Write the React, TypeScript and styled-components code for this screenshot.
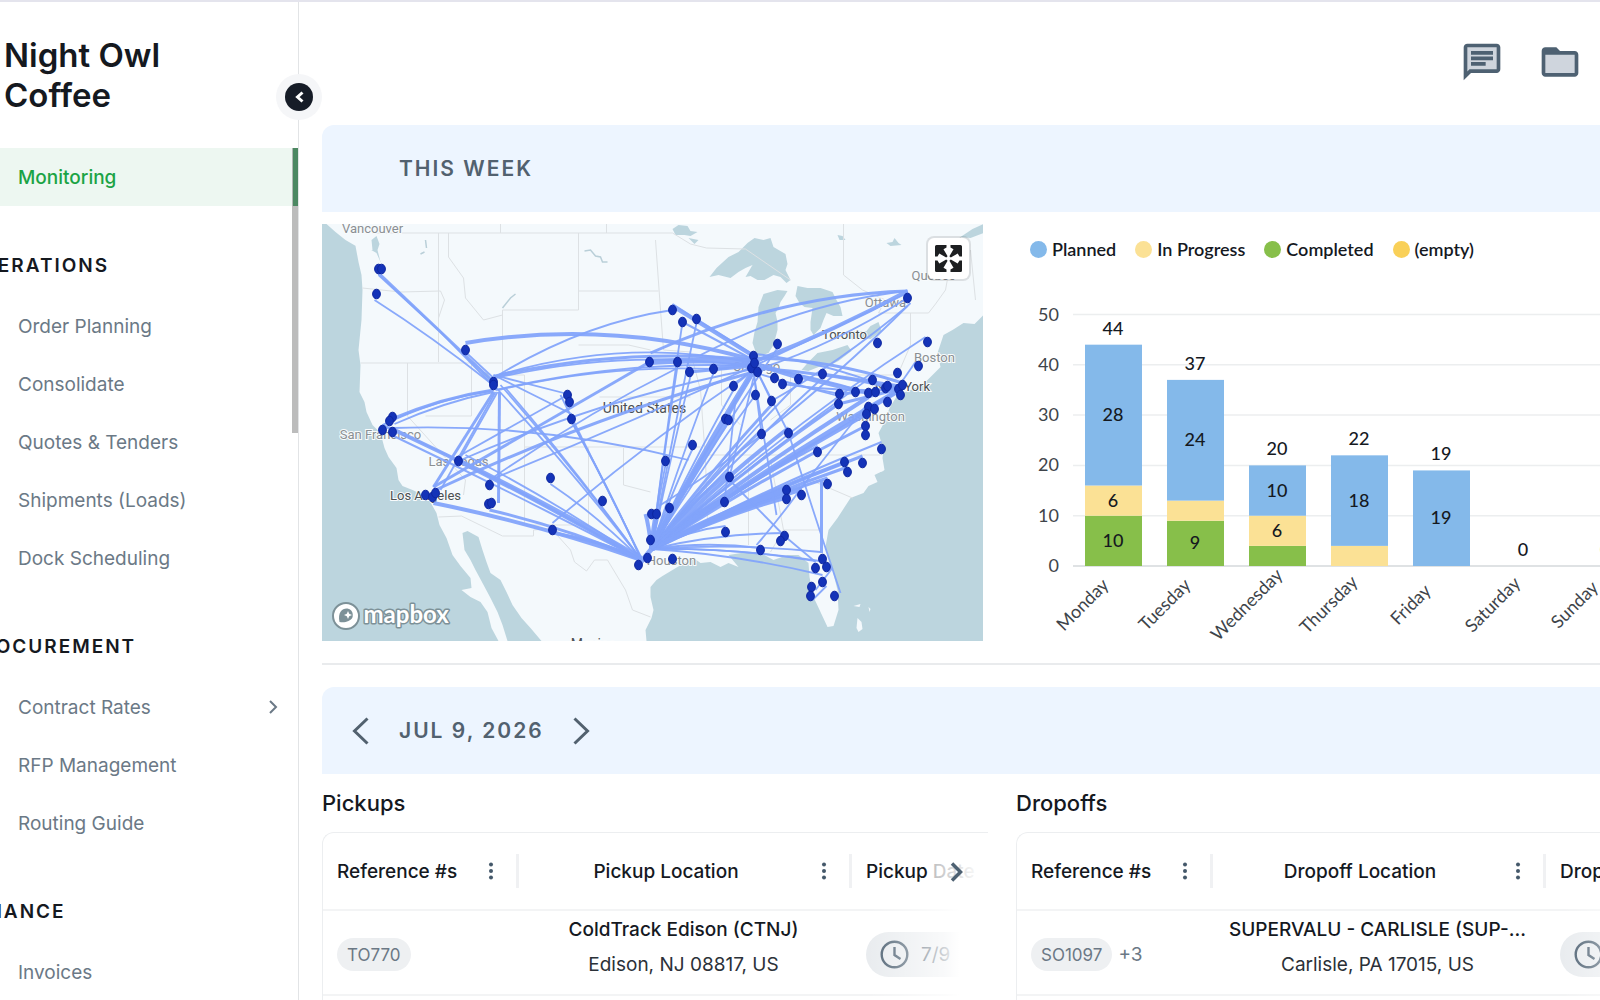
import React from "react";
import styled, { createGlobalStyle } from "styled-components";

const GlobalStyle = createGlobalStyle`
  *, *::before, *::after { box-sizing: border-box; }
  body {
    margin: 0;
    background: #fff;
    color: #15191f;
    font-family: Inter, "Liberation Sans", sans-serif;
    overflow: hidden;
  }
  button { font: inherit; color: inherit; background: none; border: 0; padding: 0; cursor: pointer; }
  h1, h2, h3, ul, p { margin: 0; padding: 0; font-weight: inherit; }
  ul { list-style: none; }
`;

/* ---------- shell ---------- */

const Shell = styled.div`
  display: flex;
  height: 100vh;
  overflow: hidden;
  border-top: 2px solid #e4e4ed;
`;

const Sidebar = styled.aside`
  position: relative;
  flex: 0 0 299px;
  border-right: 1px solid #e2e4e6;
`;

const Brand = styled.h1`
  height: 146px;
  padding: 33px 100px 0 4px;
  font-size: 33px;
  line-height: 40px;
  font-weight: 600;
`;

const CollapseButton = styled.button`
  position: absolute;
  top: 72px;
  right: -24px;
  z-index: 2;
  display: grid;
  place-items: center;
  width: 46px;
  height: 46px;
  border-radius: 50%;
  background: #f5f6f8;
`;

const CollapseDisc = styled.span`
  display: grid;
  place-items: center;
  width: 28px;
  height: 28px;
  border-radius: 50%;
  background: #161c27;
  color: #fff;
`;

const ScrollThumb = styled.div`
  position: absolute;
  top: 146px;
  right: 0;
  width: 6px;
  height: 285px;
  background: rgba(96, 96, 96, 0.42);
`;

const NavHeading = styled.h2`
  height: 60px;
  margin-left: -33px;
  font-size: 19px;
  line-height: 58px;
  font-weight: 600;
  letter-spacing: 2px;
`;

const NavSection = styled.section`
  padding-top: 31px;
`;

const NavLink = styled.a<{ $active?: boolean }>`
  display: flex;
  align-items: center;
  justify-content: space-between;
  height: 58px;
  padding: 0 20px 0 18px;
  font-size: 19px;
  text-decoration: none;
  font-weight: ${(p) => (p.$active ? 500 : 400)};
  color: ${(p) => (p.$active ? "#1ba345" : "#6b7986")};
  background: ${(p) => (p.$active ? "#edf7f1" : "transparent")};
  border-right: ${(p) => (p.$active ? "5px solid #3fa565" : "0")};
`;

const Main = styled.main`
  flex: 1;
  min-width: 0;
  padding-left: 23px;
  overflow: hidden;
`;

const TopBar = styled.header`
  display: flex;
  align-items: flex-start;
  justify-content: flex-end;
  gap: 34px;
  height: 123px;
  padding: 38px 18px 0 0;
`;

const Content = styled.div`
  width: calc(100% + 82px);
`;

const Banner = styled.div`
  display: flex;
  align-items: center;
  height: 87px;
  padding-left: 30px;
  border-radius: 12px 12px 0 0;
  background: #edf5ff;
  color: #52616f;
`;

const BannerSlot = styled.div`
  width: 47px;
  display: flex;
`;

const BannerTitle = styled.h2`
  padding-right: 29px;
  font-size: 21px;
  font-weight: 600;
  letter-spacing: 2px;
`;

const IconButton = styled.button`
  display: grid;
  place-items: center;
`;

const Columns = styled.div`
  display: grid;
  grid-template-columns: repeat(2, minmax(0, 1fr));
  gap: 28px;
`;

const Overview = styled(Columns)`
  padding: 12px 0 22px;
  margin-bottom: 22px;
  border-bottom: 2px solid #e9ebed;
`;

const MapFrame = styled.div`
  position: relative;
  height: 417px;
  margin-right: 5px;
  overflow: hidden;
`;

const ExpandButton = styled.button`
  position: absolute;
  top: 14px;
  right: 14px;
  display: grid;
  place-items: center;
  width: 41px;
  height: 41px;
  border-radius: 6px;
  background: #fff;
  box-shadow: 0 0 0 2px rgba(0, 0, 0, 0.1);
`;

const Drawing = styled.svg`
  display: block;
  overflow: hidden;
`;

const ChartBox = styled.div`
  font-family: Lato, "Liberation Sans", sans-serif;
  padding-top: 13px;
  height: 417px;
  overflow: hidden;
`;

const Legend = styled.ul`
  display: flex;
  gap: 19px;
  height: 24px;
  padding-left: 14px;
  font-size: 18px;
  line-height: 24px;
  font-weight: 600;
`;

const LegendItem = styled.li`
  display: flex;
  align-items: center;
  gap: 5px;
`;

const LegendDot = styled.span<{ $color: string }>`
  width: 17px;
  height: 17px;
  border-radius: 50%;
  background: ${(p) => p.$color};
`;

/* ---------- tables ---------- */

const TableTitle = styled.h3`
  height: 58px;
  font-size: 22px;
  line-height: 58px;
  font-weight: 500;
`;

const TableCard = styled.div`
  position: relative;
  overflow: hidden;
  border: 1px solid #eceef0;
  border-right: 0;
  border-radius: 12px 0 0 0;
`;

const Table = styled.table`
  width: 760px;
  border-collapse: collapse;
  table-layout: fixed;
`;

const Th = styled.th`
  height: 77px;
  padding: 0;
  border-bottom: 2px solid #f3f4f5;
  font-size: 19px;
  font-weight: 500;
`;

const HeadCell = styled.div<{ $center?: boolean }>`
  display: flex;
  align-items: center;
  height: 34px;
  padding: 0 0 0 14px;
  border-right: 3px solid #f0f1f3;
  text-align: ${(p) => (p.$center ? "center" : "left")};
`;

const HeadLabel = styled.span`
  flex: 1;
  white-space: nowrap;
`;

const MenuButton = styled.button`
  display: grid;
  place-items: center;
  width: 50px;
  height: 34px;
`;

const Td = styled.td<{ $center?: boolean }>`
  height: 85px;
  padding: ${(p) => (p.$center ? "0 4px 12px 0" : "0 0 0 14px")};
  border-bottom: 2px solid #f3f4f5;
  text-align: ${(p) => (p.$center ? "center" : "left")};
  font-size: 19px;
  line-height: 35px;
  color: #2b3138;
  white-space: nowrap;
`;

const Place = styled.strong`
  display: block;
  font-weight: 500;
  color: #15191f;
`;

const RefCell = styled.div`
  display: flex;
  align-items: center;
  gap: 6px;
  padding-top: 4px;
  color: #6b7885;
`;

const Chip = styled.span`
  height: 33px;
  padding: 0 10px;
  border-radius: 17px;
  background: #eef0f2;
  font-size: 17px;
  line-height: 35px;
`;

const DateChip = styled.div`
  display: flex;
  align-items: center;
  gap: 12px;
  width: 190px;
  height: 45px;
  margin-top: 4px;
  padding-left: 14px;
  border-radius: 23px;
  background: #e9ecef;
  color: #52616f;
`;

const BodyFade = styled.div`
  position: absolute;
  top: 76px;
  right: 0;
  bottom: 0;
  width: 120px;
  background: linear-gradient(to right, rgba(255, 255, 255, 0), rgba(255, 255, 255, 0.72) 64%, #fff 76%);
`;

const ScrollRight = styled.button`
  position: absolute;
  top: 4px;
  right: 0;
  display: flex;
  align-items: center;
  width: 60px;
  height: 70px;
  padding-left: 20px;
  background: linear-gradient(to right, rgba(255, 255, 255, 0.7), #fff 90%);
`;

/* ---------- icons ---------- */

function Chevron({ dir, w, h, stroke }: { dir: "left" | "right"; w: number; h: number; stroke: number }) {
  const p = stroke / 2;
  const d =
    dir === "left"
      ? `M${w - p} ${p} L${p + 1} ${h / 2} L${w - p} ${h - p}`
      : `M${p} ${p} L${w - p - 1} ${h / 2} L${p} ${h - p}`;
  return (
    <svg width={w} height={h} viewBox={`0 0 ${w} ${h}`} fill="none" stroke="currentColor" strokeWidth={stroke} aria-hidden>
      <path d={d} />
    </svg>
  );
}

const ChatIcon = () => (
  <svg width="44" height="44" viewBox="0 0 24 24" aria-hidden>
    <path d="M3 3h18v14H5l-2 2z" fill="#cfd5dd" />
    <path
      fill="#4e6172"
      d="M4 4h16v12H5.170L4 17.170V4m0-2c-1.100 0-1.990.9-1.990 2L2 22l4-4h14c1.100 0 2-.9 2-2V4c0-1.100-.9-2-2-2H4zm2 10h8v2H6v-2zm0-3h12v2H6V9zm0-3h12v2H6V6z"
    />
  </svg>
);

const FolderIcon = () => (
  <svg width="44" height="44" viewBox="0 0 24 24" aria-hidden>
    <path d="M3 7h18v12H3z" fill="#cfd5dd" />
    <path
      fill="#4e6172"
      d="M20 6h-8l-2-2H4c-1.100 0-1.990.9-1.990 2L2 18c0 1.100.9 2 2 2h16c1.100 0 2-.9 2-2V8c0-1.100-.9-2-2-2zm0 12H4V8h16v10z"
    />
  </svg>
);

const DotsIcon = () => (
  <svg width="6" height="18" viewBox="0 0 6 18" fill="#44586a" aria-hidden>
    <circle cx="3" cy="2.500" r="2" />
    <circle cx="3" cy="9" r="2" />
    <circle cx="3" cy="15.500" r="2" />
  </svg>
);

const ClockIcon = () => (
  <svg width="29" height="29" viewBox="0 0 29 29" fill="none" stroke="#4e6172" strokeWidth="2.400" aria-hidden>
    <circle cx="14.500" cy="14.500" r="12.800" />
    <path d="M14.500 7v8l6 4" />
  </svg>
);

const ExpandIcon = () => (
  <svg width="27" height="27" viewBox="0 0 27 27" fill="#1d1f21" aria-hidden>
    {[0, 90, 180, 270].map((a) => (
      <path
        key={a}
        transform={`rotate(${a} 13.500 13.500)`}
        d="M0 1.500Q0 0 1.500 0H11.500V2.500L8.500 4.300 12.600 11.200 11.200 12.600 4.300 8.500 2.500 11.500H0z"
      />
    ))}
  </svg>
);

/* ---------- map ---------- */

const LAND =
  "M326 224L335 232 345 240 357 247 372 250 371 240 376 236 379 244 377 250 380 262 376 253 369 249 355 246 358 262 361 275 362 290 361 320 358 350 360 365 359 392 364 402 366 412 372 425 380 433 384 448 388 457 396 468 398 480 402 486 412 490 427 497 436 513 439 525 446 538 452 555 460 566 470 578 471 588 461 590 470 597 480 602 487 612 491 628 498 641H507L502 625 497 612 490 598 482 583 475 570 470 560 464 550 462 533 467 531 478 537 482 550 486 562 490 573 500 580 506 592 512 605 521 618 530 628 541 641H646L645 630 651 618 653 610 650 597 650 587 656 580 662 576 677 567 693 558 700 563 710 562 720 567 728 563 738 567 733 561 728 555 747 552 760 553 773 560 787 555 798 555 808 563 809 577 813 597 820 612 827 627 833 626 838 610 837 590 832 570 825 547 828 530 837 518 850 498 863 493 868 486 877 482 874 475 884 470 882 458 883 450 878 433 884 422 889 408 897 395 915 388 927 380 940 367 937 353 943 335 952 330 963 323 974 324 983 315V224z";

const WATERS = [
  "M709 277L716 268 728 257 738 252 747 243 754 238 763 240 770 238 773 247 785 254 787 264 785 270 790 280 786 283 780 277 773 275 764 280 757 280 750 276 745 277 752 265 745 268 738 272 730 278 718 275z",
  "M763 294L770 292 777 290 787 291 784 296 780 302 778 308 775 313 777 322 777 330 773 345 768 353 757 357 752 343 754 332 757 322 758 307z",
  "M797 286L807 288 820 288 832 292 836 300 840 307 842 316 833 316 826 313 823 320 820 328 813 335 810 330 810 322 812 308 804 307 799 303 795 296z",
  "M801 370L808 362 817 353 832 350 847 345 851 351 838 361 828 366 818 367 808 371z",
  "M846 333L854 331 866 331 870 326 878 322 881 331 870 339 861 338 852 340z",
  "M960 237L972 229 983 224V233L970 238z",
  "M672 229L678 225 687 226 690 231 697 232 690 236 684 235 675 235z M688 238L698 240 694 244z",
  "M837 235L842 236 845 240 839 240z M886 243L892 242 894 238 898 243 901 245 890 246z",
  "M480 371L487 373 492 380 486 380z",
];

const BORDERS =
  "M372 233H672L690 244 706 248 745 249 790 280M843 224V275L862 290 885 300 878 313H928L935 304 945 290 950 262 960 237M448 233V257L463 278 465 298 483 320 502 315 502 310M438 233V362M362 288L400 292 440 291 444 300 438 318V362M360 363H502V310H578V233M502 352V375H524V447M578 291H658M578 345H628L650 350M471 363V416L425 416M407 363V416L465 480 463 495M438 517L461 516 502 536H533V530L556 528M599 397H690M524 447V525H588V447M524 447H700M623 448V485L650 492M552 530L570 550 574 562 586 571 594 560H607L625 590 632 610 650 617M655 240L660 310 663 350 690 352 700 390 705 460 707 520M721 370V405L740 425M748 460V545M770 460L783 530 770 552M783 530H820M700 455H880M810 480L852 498M790 370V405L770 420M845 375H893M910 313V345L895 380M970 250L975 300M500 224V233M606 224V233";

type Link = [number, number, number, number, number, number?];

const DALLAS = [651, 549];
const HOUSTON = [641, 560];
const SPOKES: [number, number, number?][] = [
  [493, 385], [500, 385], [505, 388], [465, 455], [382, 425, 3], [392, 428, 2], [433, 503, 4], [489, 510, 3], [552, 533, 3], [550, 484],
  [569, 418], [573, 425], [677, 366], [691, 372], [713, 373], [733, 390], [753, 370, 5], [755, 395], [725, 424, 6], [696, 323],
  [682, 322], [665, 465], [692, 449], [729, 472, 4], [724, 498, 3], [761, 430, 3], [771, 405, 3], [788, 428, 4], [798, 383],
  [822, 378, 2], [838, 404, 3], [868, 397, 4], [866, 414, 4], [899, 390, 5], [865, 426, 3], [881, 442, 2], [862, 456, 3],
  [844, 462, 3], [847, 467, 3], [827, 478, 3], [817, 446, 2], [801, 489, 5], [786, 490, 5], [786, 497, 5], [725, 526],
  [784, 533], [760, 548], [820, 552], [826, 562], [815, 561], [822, 575], [669, 512, 5], [777, 348], [872, 376], [656, 514, 8], [645, 514, 4],
];

const LINKS: Link[] = [
  [378, 273, 493, 382, 0, 3], [378, 275, 440, 332, 0], [374, 300, 490, 383, -3], [440, 332, 495, 388, 0],
  [465, 352, 493, 378, 0], [465, 343, 753, 360, -22, 4], [495, 376, 753, 360, -14, 3], [495, 376, 753, 363, -22],
  [495, 378, 868, 393, -34, 2], [495, 390, 753, 366, -12, 2], [498, 390, 713, 369, -10], [493, 378, 672, 310, -14],
  [389, 420, 493, 390, -5, 3], [394, 424, 493, 392, -4], [382, 425, 490, 391, -6], [392, 428, 688, 460, -14],
  [433, 487, 493, 392, 0, 3], [440, 490, 495, 392, 0], [458, 461, 497, 392, 0], [499, 392, 498, 503, 0, 3],
  [433, 487, 649, 362, 0, 3], [435, 490, 753, 372, -10, 3], [458, 461, 753, 369, -12], [489, 480, 677, 368, -6],
  [460, 461, 641, 558, -3, 4], [389, 434, 641, 560, -2, 2], [560, 395, 641, 558, 0],
  [552, 523, 753, 370, -6], [455, 458, 567, 395, 0], [493, 375, 571, 395, 0], [493, 375, 571, 414, 0],
  [672, 306, 753, 356, 0, 4], [682, 322, 753, 360, 0, 2], [696, 319, 755, 356, 0], [672, 304, 697, 320, 0],
  [907, 291, 753, 362, 4, 4], [907, 291, 650, 353, -18, 3], [907, 291, 700, 355, -14], [907, 298, 755, 370, 8, 2],
  [907, 306, 771, 401, 6], [910, 303, 660, 505, 16], [925, 337, 651, 549, -12], [915, 362, 899, 385, 0], [907, 293, 489, 480, 6],
  [753, 363, 868, 393, 2, 4], [753, 358, 902, 383, -8, 3], [753, 368, 899, 389, -4, 3], [755, 354, 886, 387, -6, 2],
  [777, 380, 838, 396, 0], [753, 372, 839, 394, 2], [782, 384, 899, 389, 4], [753, 365, 798, 379, 0], [757, 372, 771, 401, 0],
  [753, 372, 761, 434, 0], [757, 372, 788, 433, 0], [733, 386, 753, 370, 0], [725, 419, 753, 372, 0, 4],
  [649, 362, 753, 362, -2, 6], [689, 372, 753, 366, 0, 3], [713, 369, 753, 363, 0, 4],
  [839, 394, 899, 388, 0, 3], [838, 404, 899, 389, 0, 3], [865, 410, 900, 390, 0, 3], [822, 374, 899, 386, 0, 3],
  [753, 372, 776, 515, 0], [788, 433, 840, 593, 2], [821, 480, 821, 553, 0, 3],
  [729, 480, 784, 536, 0], [784, 536, 815, 562, 0], [756, 545, 803, 485, 2], [803, 485, 866, 405, 0], [735, 400, 724, 502, 0],
  [832, 568, 815, 590, 0], [826, 586, 812, 600, 0], [638, 565, 651, 549, 0, 5], [753, 378, 729, 477, 0],
];

const DOTS: [number, number][] = [
  [378, 269], [381, 269], [376, 294], [465, 350], [493, 382], [493, 385], [567, 395], [569, 402], [571, 419], [649, 362],
  [392, 417], [389, 421], [382, 430], [392, 432], [458, 461], [489, 485], [488, 504], [491, 503], [550, 478], [602, 501],
  [552, 530], [425, 495], [432, 497], [435, 493], [638, 565], [647, 558], [650, 540], [651, 514], [656, 514], [672, 310],
  [682, 322], [696, 319], [777, 344], [907, 298], [877, 343], [927, 342], [918, 366], [677, 362], [689, 372], [713, 369],
  [733, 386], [753, 356], [751, 368], [754, 363], [757, 372], [774, 378], [782, 384], [798, 379], [822, 374], [755, 395],
  [771, 401], [725, 419], [728, 420], [761, 434], [788, 433], [839, 394], [838, 404], [855, 392], [868, 393], [875, 392],
  [872, 380], [897, 373], [885, 388], [887, 386], [898, 389], [902, 385], [900, 395], [887, 402], [868, 407], [874, 409],
  [866, 414], [865, 426], [865, 435], [692, 445], [665, 461], [729, 477], [724, 502], [669, 508], [725, 532], [672, 559],
  [760, 550], [784, 536], [780, 541], [786, 490], [786, 499], [801, 495], [817, 452], [844, 462], [847, 472], [862, 463],
  [881, 449], [827, 484], [822, 559], [815, 568], [826, 567], [822, 582], [811, 587], [810, 596], [834, 596],
];

const LABELS: { t: string; x: number; y: number; dark?: boolean; big?: boolean }[] = [
  { t: "Vancouver", x: 372, y: 233 },
  { t: "Québec", x: 933, y: 280 },
  { t: "Ottawa", x: 885, y: 307 },
  { t: "Toronto", x: 844, y: 339, dark: true },
  { t: "Chicago", x: 756, y: 371 },
  { t: "Boston", x: 934, y: 362 },
  { t: "New York", x: 902, y: 391, dark: true },
  { t: "Washington", x: 870, y: 421 },
  { t: "San Francisco", x: 380, y: 439 },
  { t: "Las Vegas", x: 458, y: 466 },
  { t: "Los Angeles", x: 425, y: 500, dark: true },
  { t: "Houston", x: 671, y: 565 },
  { t: "United States", x: 644, y: 413, dark: true, big: true },
  { t: "Mexico", x: 593, y: 649, dark: true, big: true },
];

function arc([x1, y1, x2, y2, bend]: Link) {
  return `M${x1} ${y1}Q${(x1 + x2) / 2} ${(y1 + y2) / 2 + bend * 1.5} ${x2} ${y2}`;
}

function LaneMap() {
  return (
    <Drawing width="100%" height="100%" viewBox="321 224 662 417" preserveAspectRatio="xMidYMid slice" role="img" aria-label="Lane map">
      <rect x="0" y="0" width="1400" height="900" fill="#bcd5de" />
      <path d={LAND} fill="#f4f9fc" />
      <g fill="#bcd5de">
        {WATERS.map((d) => <path key={d} d={d} />)}
      </g>
      <g fill="#f4f9fc">
        <path d="M853 606L860 604 859 607z M857 618L861 622 862 629 858 632 856 628z M868 607L870 609 869 612z" />
        <path d="M872 466L881 463 883 471 876 473z" />
      </g>
      <path d={BORDERS} fill="none" stroke="#dde1e4" strokeWidth="1" />
      <path d="M584 251L590 250 595 256 600 257 602 262 607 262M502 308L510 298 515 294M420 254L424 252M425 240L426 248" fill="none" stroke="#b9cfd8" strokeWidth="1.500" />
      <g fontFamily='Roboto, "Liberation Sans", sans-serif' textAnchor="middle" stroke="#f8fbfc" strokeWidth="2" paintOrder="stroke">
        {LABELS.map((l) => (
          <text key={l.t} x={l.x} y={l.y} fontSize={l.big ? 14 : 13} fill={l.dark ? "#4b4f52" : "#8a8f93"}>
            {l.t}
          </text>
        ))}
      </g>
      <g fill="none" stroke="#82a4fb" strokeOpacity="0.94">
        {SPOKES.map(([x, y, w], i) => {
          const [hx, hy] = x < 600 ? HOUSTON : DALLAS;
          return <path key={i} d={arc([x, y, hx, hy, -5])} strokeWidth={w ? Math.min(w, 5) : 1.8} />;
        })}
        {LINKS.map((l, i) => <path key={i} d={arc(l)} strokeWidth={l[5] ?? 1.8} />)}
      </g>
      <g fill="#1433b8" stroke="#0e27a0" strokeWidth="1">
        {DOTS.map(([x, y], i) => <ellipse key={i} cx={x} cy={y} rx="3.900" ry="4.800" />)}
      </g>
      <circle cx="345.500" cy="616" r="13" fill="#fff" stroke="#7d9198" strokeWidth="2" />
      <path d="M339 622C337 612 342 608 347 608.500A6.500 6.500 0 0 1 348 621C345 622.500 342 622.500 339 622z" fill="#7d9198" />
      <path d="M347.500 611L348.700 613.800 351.500 615 348.700 616.200 347.500 619 346.300 616.200 343.500 615 346.300 613.800z" fill="#fff" />
      <text x="363" y="623" fontFamily='Lato, "Liberation Sans", sans-serif' fontWeight="700" fontSize="24" fill="#fff" stroke="#7d9198" strokeWidth="3" paintOrder="stroke" strokeLinejoin="round">
        mapbox
      </text>
    </Drawing>
  );
}

/* ---------- chart ---------- */

const COLORS = { planned: "#84b9ea", progress: "#fbe195", completed: "#87bf4a", empty: "#f9d058" };

const WEEK = [
  { day: "Monday", planned: 28, progress: 6, completed: 10 },
  { day: "Tuesday", planned: 24, progress: 4, completed: 9 },
  { day: "Wednesday", planned: 10, progress: 6, completed: 4 },
  { day: "Thursday", planned: 18, progress: 4, completed: 0 },
  { day: "Friday", planned: 19, progress: 0, completed: 0 },
  { day: "Saturday", planned: 0, progress: 0, completed: 0 },
  { day: "Sunday", planned: 0, progress: 0, completed: 0 },
];

const BASE = 305;
const UNIT = 5.03;

function WeekChart() {
  return (
    <Drawing width="666" height="380" viewBox="0 0 666 380" fontSize="18" role="img" aria-label="Loads per day">
      {[0, 10, 20, 30, 40, 50].map((v) => (
        <g key={v}>
          <path d={`M57 ${BASE - v * UNIT}H666`} stroke={v ? "#eceeef" : "#d5d8db"} strokeWidth="1.500" />
          <text x="43" y={BASE + 6 - v * UNIT} textAnchor="end" fill="#3e444a">{v}</text>
        </g>
      ))}
      {WEEK.map((d, i) => {
        const x = 69 + i * 82;
        const total = d.planned + d.progress + d.completed;
        let level = 0;
        return (
          <g key={d.day} textAnchor="middle" fill="#15191f">
            {(["completed", "progress", "planned"] as const).map((k) => {
              const v = d[k];
              const top = BASE - (level + v) * UNIT;
              level += v;
              return v ? (
                <g key={k}>
                  <rect x={x} y={top} width="57" height={v * UNIT} fill={COLORS[k]} />
                  {v >= 6 && <text x={x + 28} y={top + (v * UNIT) / 2 + 6} fontWeight="500">{v}</text>}
                </g>
              ) : null;
            })}
            <text x={x + 28} y={BASE - 10 - total * UNIT} fontWeight="500">{total}</text>
            <text transform={`translate(${x + 2} 348) rotate(-45)`} fill="#3e444a">{d.day}</text>
          </g>
        );
      })}
    </Drawing>
  );
}

/* ---------- load tables ---------- */

interface LoadTableProps {
  title: string;
  kind: string;
  reference: string;
  extra?: string;
  place: string;
  address: string;
}

function LoadTable({ title, kind, reference, extra, place, address }: LoadTableProps) {
  return (
    <section>
      <TableTitle>{title}</TableTitle>
      <TableCard>
        <Table>
          <colgroup>
            <col style={{ width: 196 }} />
            <col style={{ width: 333 }} />
            <col />
          </colgroup>
          <thead>
            <tr>
              <Th scope="col">
                <HeadCell>
                  <HeadLabel>Reference #s</HeadLabel>
                  <MenuButton aria-label="Column menu"><DotsIcon /></MenuButton>
                </HeadCell>
              </Th>
              <Th scope="col">
                <HeadCell $center>
                  <HeadLabel>{kind} Location</HeadLabel>
                  <MenuButton aria-label="Column menu"><DotsIcon /></MenuButton>
                </HeadCell>
              </Th>
              <Th scope="col">
                <HeadCell>
                  <HeadLabel>{kind} Date</HeadLabel>
                </HeadCell>
              </Th>
            </tr>
          </thead>
          <tbody>
            <tr>
              <Td>
                <RefCell>
                  <Chip>{reference}</Chip>
                  {extra && <span>{extra}</span>}
                </RefCell>
              </Td>
              <Td $center>
                <Place>{place}</Place>
                {address}
              </Td>
              <Td>
                <DateChip>
                  <ClockIcon />
                  7/9
                </DateChip>
              </Td>
            </tr>
            <tr><Td /><Td /><Td /></tr>
          </tbody>
        </Table>
        <BodyFade />
        <ScrollRight aria-label="Scroll columns">
          <svg width="18" height="22" viewBox="0 0 18 22" fill="none" stroke="#4e6172" strokeWidth="3.500" aria-hidden>
            <path d="M4 2.500L12.500 11 4 19.500" />
          </svg>
        </ScrollRight>
      </TableCard>
    </section>
  );
}

const NAV = [
  { title: "OPERATIONS", items: ["Order Planning", "Consolidate", "Quotes & Tenders", "Shipments (Loads)", "Dock Scheduling"] },
  { title: "PROCUREMENT", items: ["Contract Rates", "RFP Management", "Routing Guide"] },
  { title: "FINANCE", items: ["Invoices"] },
];

export default function App() {
  return (
    <>
      <GlobalStyle />
      <Shell>
        <Sidebar>
          <Brand>Night Owl Coffee</Brand>
          <CollapseButton aria-label="Collapse sidebar">
            <CollapseDisc><Chevron dir="left" w={9} h={12} stroke={3} /></CollapseDisc>
          </CollapseButton>
          <nav>
            <NavLink href="#monitoring" $active>Monitoring</NavLink>
            {NAV.map((s) => (
              <NavSection key={s.title}>
                <NavHeading>{s.title}</NavHeading>
                <ul>
                  {s.items.map((item) => (
                    <li key={item}>
                      <NavLink href="#nav">
                        {item}
                        {item === "Contract Rates" && <Chevron dir="right" w={9} h={14} stroke={2} />}
                      </NavLink>
                    </li>
                  ))}
                </ul>
              </NavSection>
            ))}
          </nav>
          <ScrollThumb />
        </Sidebar>
        <Main>
          <TopBar>
            <IconButton aria-label="Messages"><ChatIcon /></IconButton>
            <IconButton aria-label="Documents"><FolderIcon /></IconButton>
          </TopBar>
          <Content>
            <Banner>
              <BannerSlot />
              <BannerTitle>THIS WEEK</BannerTitle>
            </Banner>
            <Overview>
              <MapFrame>
                <LaneMap />
                <ExpandButton aria-label="Expand map"><ExpandIcon /></ExpandButton>
              </MapFrame>
              <ChartBox>
                <Legend>
                  <LegendItem><LegendDot $color={COLORS.planned} />Planned</LegendItem>
                  <LegendItem><LegendDot $color={COLORS.progress} />In Progress</LegendItem>
                  <LegendItem><LegendDot $color={COLORS.completed} />Completed</LegendItem>
                  <LegendItem><LegendDot $color={COLORS.empty} />(empty)</LegendItem>
                </Legend>
                <WeekChart />
              </ChartBox>
            </Overview>
            <Banner>
              <BannerSlot>
                <IconButton aria-label="Previous day"><Chevron dir="left" w={17} h={28} stroke={3} /></IconButton>
              </BannerSlot>
              <BannerTitle>JUL 9, 2026</BannerTitle>
              <IconButton aria-label="Next day"><Chevron dir="right" w={17} h={28} stroke={3} /></IconButton>
            </Banner>
            <Columns>
              <LoadTable title="Pickups" kind="Pickup" reference="TO770" place="ColdTrack Edison (CTNJ)" address="Edison, NJ 08817, US" />
              <LoadTable title="Dropoffs" kind="Dropoff" reference="SO1097" extra="+3" place="SUPERVALU - CARLISLE (SUP-..." address="Carlisle, PA 17015, US" />
            </Columns>
          </Content>
        </Main>
      </Shell>
    </>
  );
}
